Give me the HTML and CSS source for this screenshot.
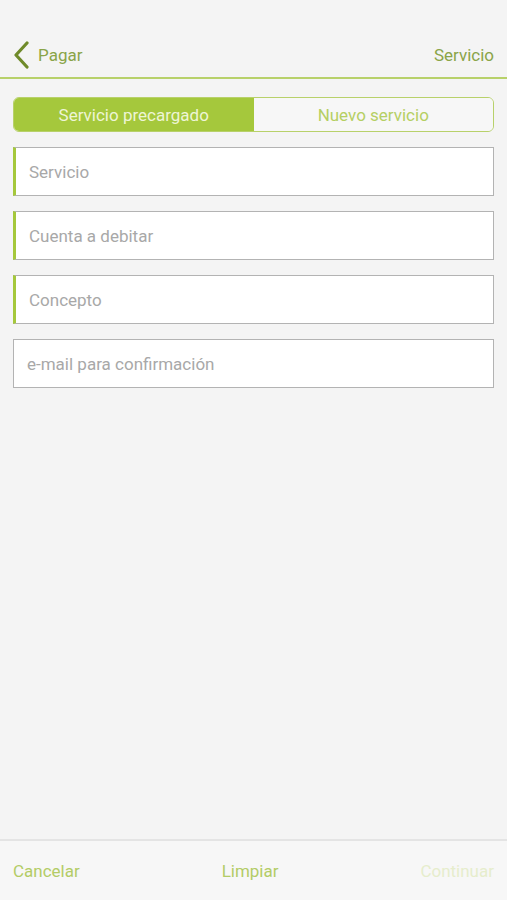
FILE: index.html
```html
<!DOCTYPE html>
<html lang="es">
<head>
  <meta charset="UTF-8">
  <title>Servicio</title>
  <link rel="stylesheet" href="styles.css">
</head>
<body>
  <div class="screen">
    <header class="topbar">
      <div class="back">
        <svg class="back-icon" width="18" height="28" viewBox="0 0 18 28">
          <path d="M15 2 L4 14 L15 26" fill="none" stroke="#6f8a2a" stroke-width="3.2" stroke-linecap="round" stroke-linejoin="round"/>
        </svg>
        <span class="back-label">Pagar</span>
      </div>
      <div class="title">Servicio</div>
    </header>

    <main class="content">
      <div class="segmented">
        <div class="seg seg-active">Servicio precargado</div>
        <div class="seg">Nuevo servicio</div>
      </div>

      <div class="field required">Servicio</div>
      <div class="field required">Cuenta a debitar</div>
      <div class="field required">Concepto</div>
      <div class="field">e-mail para confirmación</div>
    </main>

    <footer class="actions">
      <span class="action">Cancelar</span>
      <span class="action">Limpiar</span>
      <span class="action disabled">Continuar</span>
    </footer>
  </div>
</body>
</html>
```

FILE: styles.css
```css
* {
  margin: 0;
  padding: 0;
  box-sizing: border-box;
  font-family: 'Roboto', 'Liberation Sans', sans-serif;
}

:root {
  --bg: #f4f4f4;
  --green: #a5c83c;
  --green-line: #b8d16a;
  --olive: #8aa448;
  --placeholder: #a8a8a8;
  --border: #b3b3b3;
}

body {
  background: var(--bg);
}

.screen {
  width: 507px;
  height: 900px;
  display: flex;
  flex-direction: column;
}

.topbar {
  height: 79px;
  padding: 32px 13px 0 12px;
  display: flex;
  align-items: center;
  justify-content: space-between;
  border-bottom: 2px solid var(--green-line);
}

.back {
  display: flex;
  align-items: center;
  gap: 8px;
}

.back-label,
.title {
  font-size: 17px;
  color: var(--olive);
}

.content {
  flex: 1;
  padding: 18px 13px 0;
  display: flex;
  flex-direction: column;
  gap: 15px;
}

.segmented {
  display: flex;
  height: 35px;
  border: 1.5px solid var(--green-line);
  border-radius: 6px;
  overflow: hidden;
}

.seg {
  flex: 1;
  display: flex;
  align-items: center;
  justify-content: center;
  font-size: 17px;
  color: #b5cf63;
  background: #f7f7f7;
}

.seg-active {
  background: var(--green);
  color: #eef5d5;
}

.field {
  height: 49px;
  background: #fff;
  border: 1.5px solid var(--border);
  display: flex;
  align-items: center;
  padding-left: 13px;
  font-size: 17px;
  color: var(--placeholder);
}

.field.required {
  border-left: 3px solid var(--green);
}

.actions {
  height: 61px;
  border-top: 2px solid #e4e4e4;
  background: #f7f7f7;
  display: flex;
  align-items: center;
  justify-content: space-between;
  padding: 0 13px;
}

.action {
  font-size: 17px;
  color: #b3cc66;
}

.action.disabled {
  color: #e6edcc;
}
```
